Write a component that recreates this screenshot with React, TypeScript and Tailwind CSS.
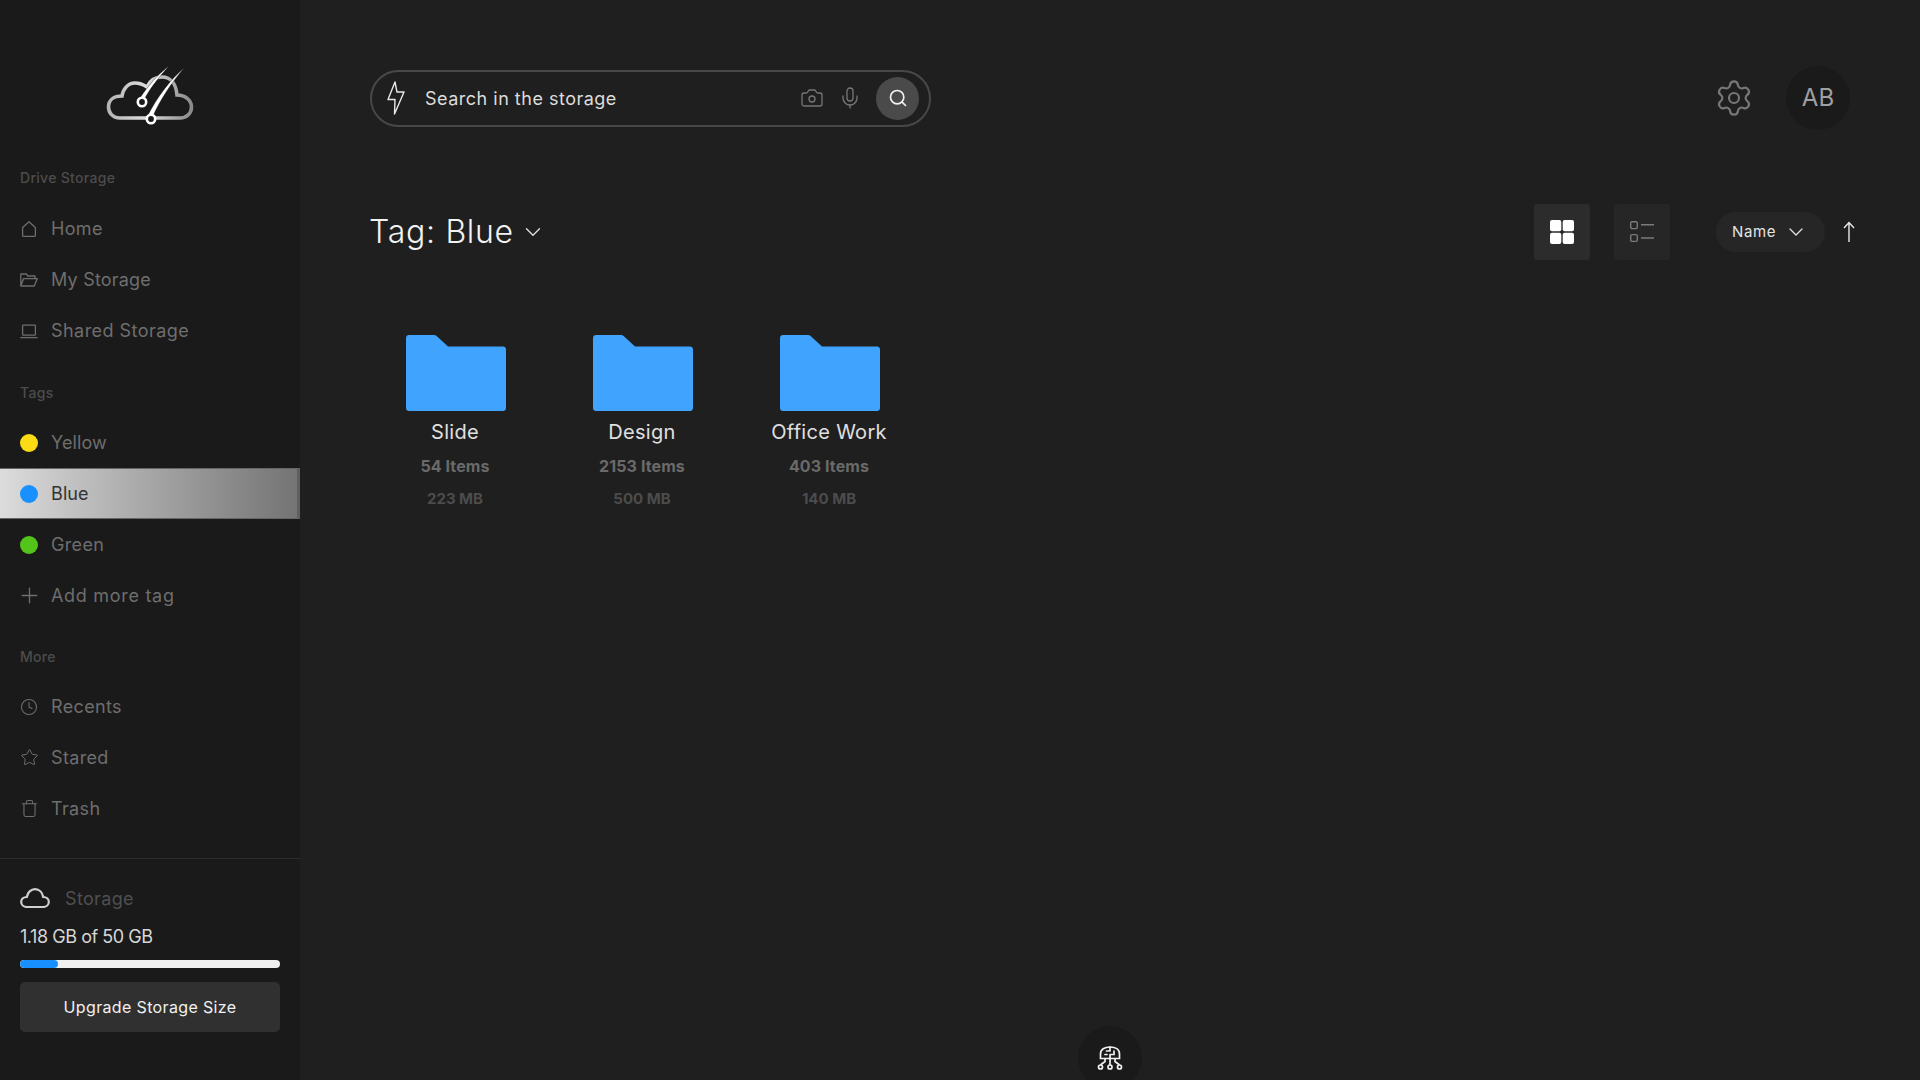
import React from "react";
import { Clock, Star, Trash, Camera, Mic, Search, Settings, ChevronDown, Plus } from "lucide-react";

const font = "font-['Inter','Liberation_Sans',sans-serif]";

function Logo() {
  return (
    <svg width="120" height="90" viewBox="0 0 120 90" fill="none">
      <defs>
        <linearGradient id="lg" x1="0" y1="0" x2="1" y2="0">
          <stop offset="0" stopColor="#b5b5b5" />
          <stop offset="0.45" stopColor="#dddddd" />
          <stop offset="1" stopColor="#8a8a8a" />
        </linearGradient>
      </defs>
      <path d="M30 68C22 68 18.5 62 18.5 57C18.5 50 24 46 32 46C33 39 38 33 45 33C50 33 54 35 57 37C60 30 66 27 72 27C80 27 86 33 87 45C95 45 101.5 50 101.5 57C101.5 63 97 68 90 68Z" stroke="url(#lg)" strokeWidth="3.6" />
      <path d="M79 16C68 24 58 36 50 48L54 50C60 38 70 26 79 16Z" fill="#fff" stroke="#1a1a1a" strokeWidth="0.4" />
      <path d="M94 18C80 30 68 46 58 65L63 66C70 50 82 32 94 18Z" fill="#fff" stroke="#1a1a1a" strokeWidth="0.4" />
      <circle cx="52" cy="52" r="4.2" fill="#1a1a1a" stroke="#fff" strokeWidth="2.6" />
      <circle cx="61" cy="69" r="4.2" fill="#1a1a1a" stroke="#fff" strokeWidth="2.6" />
    </svg>
  );
}

function HomeIcon() {
  return (
    <svg width="18" height="18" viewBox="0 0 18 18" fill="none" stroke="currentColor" strokeWidth="1.3" strokeLinejoin="round" className="shrink-0">
      <path d="M9 1.8L2.6 7.6V15.4C2.6 16 3 16.4 3.6 16.4H14.4C15 16.4 15.4 16 15.4 15.4V7.6Z" />
    </svg>
  );
}
function OpenFolderIcon() {
  return (
    <svg width="18" height="18" viewBox="0 0 18 18" fill="none" stroke="currentColor" strokeWidth="1.3" strokeLinejoin="round" className="shrink-0">
      <path d="M0.8 15V3H6.3L7.8 5H15V7.6M0.8 15H14.3L17.3 7.6H3.6L0.8 15Z" />
    </svg>
  );
}
function LaptopIcon() {
  return (
    <svg width="18" height="18" viewBox="0 0 18 18" fill="none" stroke="currentColor" strokeWidth="1.3" className="shrink-0">
      <rect x="2.6" y="3.2" width="12.8" height="10" rx="0.6" />
      <path d="M0.4 15.6H17.6" />
    </svg>
  );
}
function Dot({ c }: { c: string }) {
  return <span className={`block w-[18px] h-[18px] rounded-full shrink-0 ${c}`} />;
}

function Row({ icon, label, cls = "tracking-[0.35px]" }: { icon: React.ReactNode; label: string; cls?: string }) {
  return (
    <div className="h-[51px] pl-5 flex items-center text-[#6e6e6e]">
      <span className="w-[18px] h-[18px] flex items-center justify-center shrink-0">{icon}</span>
      <span className={`ml-[13px] text-[18px] ${cls}`}>{label}</span>
    </div>
  );
}

function SectionLabel({ children, cls }: { children: string; cls: string }) {
  return <div className={`pl-5 h-5 leading-5 text-[14px] font-medium tracking-[0.3px] text-[#4c4c4c] ${cls}`}>{children}</div>;
}

function Sidebar() {
  return (
    <aside className="w-[300px] h-full shrink-0 bg-[#1a1a1a] flex flex-col">
      <div className="h-[168px] flex items-start justify-center pt-[50px]">
        <Logo />
      </div>
      <SectionLabel cls="mb-[15px]">Drive Storage</SectionLabel>
      <Row icon={<HomeIcon />} label="Home" />
      <Row icon={<OpenFolderIcon />} label="My Storage" cls="tracking-[0.2px]" />
      <Row icon={<LaptopIcon />} label="Shared Storage" cls="tracking-[0.45px]" />
      <SectionLabel cls="mt-[27px] mb-[14px]">Tags</SectionLabel>
      <Row icon={<Dot c="bg-[#fadb14]" />} label="Yellow" cls="tracking-[0.1px]" />
      <div className="h-[51px] pl-5 flex items-center text-[#333] bg-gradient-to-r from-[#dcdcdc] to-[#747474] border-y border-[#666] border-r-[3px] border-r-[#5f5f5f]">
        <Dot c="bg-[#1890ff]" />
        <span className="ml-[13px] text-[18px] tracking-[0.1px]">Blue</span>
      </div>
      <Row icon={<Dot c="bg-[#52c41a]" />} label="Green" />
      <Row icon={<Plus size={25} strokeWidth={1.25} className="shrink-0" />} label="Add more tag" cls="tracking-[0.7px]" />
      <SectionLabel cls="mt-[26px] mb-[14px]">More</SectionLabel>
      <Row icon={<Clock size={18} strokeWidth={1.4} className="shrink-0" />} label="Recents" />
      <Row icon={<Star size={19} strokeWidth={1.25} className="shrink-0" />} label="Stared" />
      <Row icon={<Trash size={19} strokeWidth={1.35} className="shrink-0" />} label="Trash" />
      <div className="mt-[24px] border-t border-[#2d2d2d] px-5 pt-[25px]">
        <div className="flex items-center h-7">
          <svg width="30" height="20" viewBox="0 0 30 20" fill="none" stroke="#d0d0d0" strokeWidth="2.2" className="shrink-0">
            <path d="M7 19C3.5 19 1.2 16.7 1.2 14C1.2 11 3.5 9 6.8 9C7.5 4.5 11 1.2 15 1.2C19.5 1.2 22.5 4.5 23.2 9C26.5 9 28.8 11 28.8 14C28.8 16.7 26.5 19 23 19Z" />
          </svg>
          <span className="ml-[15px] text-[18px] tracking-[0.35px] text-[#4f4f4f]">Storage</span>
        </div>
        <div className="mt-[13px] h-6 leading-6 text-[18px] tracking-[-0.45px] text-[#d6d6d6]">1.18 GB of 50 GB</div>
        <div className="mt-[11px] h-2 rounded-full bg-[#f0f0f0] overflow-hidden">
          <div className="h-full w-[38px] rounded-full bg-[#1890ff]" />
        </div>
        <div className="mt-[14px] h-[50px] rounded-[5px] bg-[#303030] flex items-center justify-center text-[16px] tracking-[0.35px] text-[#f0f0f0]">
          Upgrade Storage Size
        </div>
      </div>
    </aside>
  );
}

function FolderIcon() {
  return (
    <svg width="100" height="76" viewBox="0 0 100 76" className="ml-px">
      <path d="M3 0H28C29 0 30 .4 30.6 1L42 11.5H97C98.7 11.5 100 12.8 100 14.5V73C100 74.7 98.7 76 97 76H3C1.3 76 0 74.7 0 73V3C0 1.3 1.3 0 3 0Z" fill="#40a4ff" />
    </svg>
  );
}

function Folder({ name, items, size }: { name: string; items: string; size: string }) {
  return (
    <div className="w-[172px] flex flex-col items-center">
      <FolderIcon />
      <div className="mt-[7px] h-7 leading-7 text-[20px] tracking-[0.3px] text-[#e0e0e0]">{name}</div>
      <div className="mt-[7px] h-[26px] leading-[26px] text-[16px] font-bold tracking-[0.1px] text-[#6a6a6a]">{items}</div>
      <div className="mt-[7px] h-[26px] leading-[26px] text-[15px] font-bold text-[#4c4c4c]">{size}</div>
    </div>
  );
}

function Jelly() {
  return (
    <svg width="26" height="26" viewBox="0 0 26 26" fill="none" stroke="#f0f0f0" strokeWidth="1.7" strokeLinecap="round">
      <path d="M3.5 13.5V9C3.5 4.5 7.5 2 13 2C18.5 2 22.5 4.5 22.5 9V13.5H3.5Z" />
      <path d="M13 2V6M13 6H9.5M13 9.5H17V6M13 9.5V13.5M8 9.5H10" />
      <path d="M8 13.5V16.5L4 19.5M13 13.5V20M18 13.5V16.5L22 19.5" />
      <circle cx="3.5" cy="22" r="2" />
      <circle cx="13" cy="22" r="2" />
      <circle cx="22.5" cy="22" r="2" />
    </svg>
  );
}

export default function App() {
  return (
    <div className={`relative w-[1920px] h-[1080px] overflow-hidden flex bg-[#1f1f1f] ${font}`}>
      <Sidebar />
      <main className="flex-1 min-w-0 pl-[70px] pr-[70px] pt-[66px]">
        <div className="flex items-center justify-between h-[64px]">
          <div className="w-[561px] shrink-0 h-[57px] rounded-full border-2 border-[#484848] flex items-center pl-[15px] pr-[10px]">
            <svg width="18" height="34" viewBox="0 0 18 34" fill="none" stroke="#e8e8e8" strokeWidth="1.4" strokeLinejoin="round" className="shrink-0">
              <path d="M8 1L1 18.5H8L7.5 33L17 11H10L8 1Z" />
            </svg>
            <span className="ml-[20px] text-[18px] text-[#dcdcdc] tracking-[0.5px]">Search in the storage</span>
            <Camera size={24} strokeWidth={1.3} className="ml-auto text-[#777]" />
            <Mic size={24} strokeWidth={1.3} className="ml-[14px] text-[#777]" />
            <span className="ml-[14px] w-[43px] h-[43px] rounded-full bg-[#4a4a4a] flex items-center justify-center">
              <Search size={20} strokeWidth={2} className="text-[#f0f0f0]" />
            </span>
          </div>
          <div className="flex items-center">
            <Settings size={40} strokeWidth={1.3} className="text-[#777]" />
            <span className="ml-[32px] w-16 h-16 rounded-full bg-[#1a1a1a] flex items-center justify-center text-[24px] text-[#a0a0a0]">AB</span>
          </div>
        </div>
        <div className="mt-[74px] flex items-center h-14 -ml-px">
          <span className="text-[32px] font-light tracking-[0.7px] text-[#f2f2f2]">Tag: Blue</span>
          <ChevronDown size={26} strokeWidth={1.3} className="ml-[6px] text-[#ddd]" />
          <div className="ml-auto w-14 h-14 rounded-[3px] bg-[#2c2c2c] flex items-center justify-center">
            <svg width="24" height="24" viewBox="0 0 24 24" fill="#fff">
              <rect x="0" y="0" width="11.3" height="11.3" rx="2" />
              <rect x="12.7" y="0" width="11.3" height="11.3" rx="2" />
              <rect x="0" y="12.7" width="11.3" height="11.3" rx="2" />
              <rect x="12.7" y="12.7" width="11.3" height="11.3" rx="2" />
            </svg>
          </div>
          <div className="ml-6 w-14 h-14 rounded-[3px] bg-[#262626] flex items-center justify-center">
            <svg width="24" height="24" viewBox="0 0 24 24" fill="none" stroke="#7a7a7a" strokeWidth="1.4">
              <rect x="0.7" y="1.8" width="6.6" height="6.8" rx="1.4" />
              <rect x="0.7" y="14.6" width="6.6" height="6.8" rx="1.4" />
              <path d="M11 4.7H24M11 18H24" />
            </svg>
          </div>
          <div className="ml-[46px] w-[109px] h-10 rounded-full bg-[#262626] flex items-center pl-4 text-[15px] tracking-[0.6px] text-[#e4e4e4]">
            Name
            <ChevronDown size={24} strokeWidth={1.3} className="ml-[8px] text-[#e4e4e4]" />
          </div>
          <svg width="12" height="22" viewBox="0 0 12 22" fill="none" stroke="#e8e8e8" strokeWidth="1.4" className="ml-[18px] -mr-[5px] shrink-0">
            <path d="M6 21V1.5M1 7L6 1.5L11 7" />
          </svg>
        </div>
        <div className="mt-[75px] flex gap-[15px] -ml-px">
          <Folder name="Slide" items="54 Items" size="223 MB" />
          <Folder name="Design" items="2153 Items" size="500 MB" />
          <Folder name="Office Work" items="403 Items" size="140 MB" />
        </div>
      </main>
      <div className="absolute left-[1078px] top-[1026px] w-16 h-16 rounded-full bg-[#1a1a1a] flex items-center justify-center">
        <Jelly />
      </div>
    </div>
  );
}
